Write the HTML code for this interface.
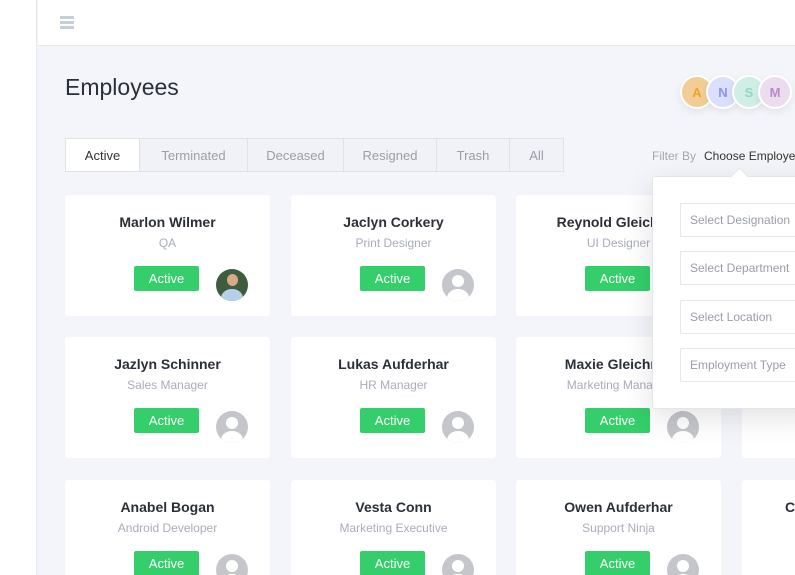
<!DOCTYPE html>
<html style="width:795px;height:575px;overflow:hidden"><head><meta charset="utf-8"><style>
*{box-sizing:border-box;margin:0;padding:0}
body{width:795px;height:575px;overflow:hidden;background:#f4f5fa;font-family:"Liberation Sans",sans-serif;position:relative}
.side{position:absolute;left:0;top:0;width:37px;height:575px;background:#fff;border-right:1px solid #e6e8ef}
.hdr{position:absolute;left:38px;top:0;right:0;height:46px;background:#fff;border-bottom:1px solid #e8eaf0}
.ham{position:absolute;left:60px;top:16px;width:14px}
.ham i{display:block;height:3px;background:#c3d0db;margin-bottom:2px}
h1{position:absolute;left:65px;top:74px;font-size:23px;font-weight:normal;color:#2b2f38}
.tabs{position:absolute;left:65px;top:138px;height:34px;display:flex;border:1px solid #dfe2ea;background:#f1f2f7}
.tabs div{border-right:1px solid #dfe2ea;font-size:13px;color:#9a9ea8;display:flex;align-items:center;justify-content:center}
.tabs div:last-child{border-right:none}
.tabs .on{background:#fff;color:#333}
.av{position:absolute;top:75px;width:34px;height:34px;border-radius:50%;border:2px solid #fff;font-size:13px;font-weight:bold;display:flex;align-items:center;justify-content:center;box-shadow:0 3px 8px rgba(0,0,0,.08)}
.card{position:absolute;width:205px;height:121px;background:#fff;border-radius:3px;text-align:center}
.card .n{margin-top:19px;font-size:14px;font-weight:bold;color:#2b2f38}
.card .r{margin-top:6px;font-size:12px;color:#a9adba}
.card .b{position:absolute;left:69px;top:71px;width:65px;height:25px;background:#34ce6a;color:#fff;font-size:13px;line-height:25px;border-radius:2px}
.card .p{position:absolute;left:151px;top:74px;width:32px;height:32px;border-radius:50%;background:#c4c6cc;overflow:hidden}
.p:before{content:"";position:absolute;left:10px;top:6px;width:12px;height:12px;border-radius:50%;background:#fff}
.p:after{content:"";position:absolute;left:5px;top:20px;width:22px;height:18px;border-radius:50% 50% 0 0;background:#fff}
.p.ph{background:#3d5d3e}
.p.ph:before{background:#d9a98a;left:11px;top:5px;width:11px;height:12px}
.p.ph:after{background:#b8cfe9}
.filt{position:absolute;left:652px;top:149px;font-size:12px;color:#a3a7b2;white-space:nowrap}
.filt b{font-weight:normal;color:#333;margin-left:8px}
.dd{position:absolute;left:652px;top:176px;width:170px;height:233px;background:#fff;border:1px solid #e3e5ec;border-radius:3px;box-shadow:0 8px 30px rgba(0,0,0,.12)}
.dd:before{content:"";position:absolute;left:80px;top:-7px;width:12px;height:12px;background:#fff;transform:rotate(45deg);border-left:1px solid #e3e5ec;border-top:1px solid #e3e5ec}
.in{position:absolute;left:27px;width:160px;height:34px;border:1px solid #e6e8ee;border-radius:2px;font-size:12px;color:#9a9ea8;padding-left:9px;line-height:32px}
</style></head><body>
<div class="side"></div>
<div class="hdr"></div>
<div class="ham"><i></i><i></i><i></i></div>
<h1>Employees</h1>
<div class="tabs">
<div class="on" style="width:74px">Active</div><div style="width:108px">Terminated</div><div style="width:96px">Deceased</div><div style="width:93px">Resigned</div><div style="width:73px">Trash</div><div style="width:53px">All</div>
</div>
<div class="av" style="left:680px;background:#f3cd96;color:#f0a030">A</div>
<div class="av" style="left:706px;background:#dcdffb;color:#8a93ef">N</div>
<div class="av" style="left:732px;background:#cfeee6;color:#8fd6c3">S</div>
<div class="av" style="left:758px;background:#ecdcf0;color:#b58bc8">M</div>

<div class="card" style="left:65px;top:195px"><div class="n">Marlon Wilmer</div><div class="r">QA</div><div class="b">Active</div><div class="p ph"></div></div>
<div class="card" style="left:291px;top:195px"><div class="n">Jaclyn Corkery</div><div class="r">Print Designer</div><div class="b">Active</div><div class="p"></div></div>
<div class="card" style="left:516px;top:195px"><div class="n">Reynold Gleichner</div><div class="r">UI Designer</div><div class="b">Active</div><div class="p"></div></div>
<div class="card" style="left:742px;top:195px"></div>
<div class="card" style="left:65px;top:337px"><div class="n">Jazlyn Schinner</div><div class="r">Sales Manager</div><div class="b">Active</div><div class="p"></div></div>
<div class="card" style="left:291px;top:337px"><div class="n">Lukas Aufderhar</div><div class="r">HR Manager</div><div class="b">Active</div><div class="p"></div></div>
<div class="card" style="left:516px;top:337px"><div class="n">Maxie Gleichner</div><div class="r">Marketing Manager</div><div class="b">Active</div><div class="p"></div></div>
<div class="card" style="left:742px;top:337px"></div>
<div class="card" style="left:65px;top:480px"><div class="n">Anabel Bogan</div><div class="r">Android Developer</div><div class="b">Active</div><div class="p"></div></div>
<div class="card" style="left:291px;top:480px"><div class="n">Vesta Conn</div><div class="r">Marketing Executive</div><div class="b">Active</div><div class="p"></div></div>
<div class="card" style="left:516px;top:480px"><div class="n">Owen Aufderhar</div><div class="r">Support Ninja</div><div class="b">Active</div><div class="p"></div></div>
<div class="card" style="left:742px;top:480px;text-align:left"><div class="n" style="padding-left:43px">Cr</div></div>

<div class="filt">Filter By<b>Choose Employee</b></div>
<div class="dd">
<div class="in" style="top:26px">Select Designation</div>
<div class="in" style="top:74px">Select Department</div>
<div class="in" style="top:123px">Select Location</div>
<div class="in" style="top:171px">Employment Type</div>
</div>
</body></html>
